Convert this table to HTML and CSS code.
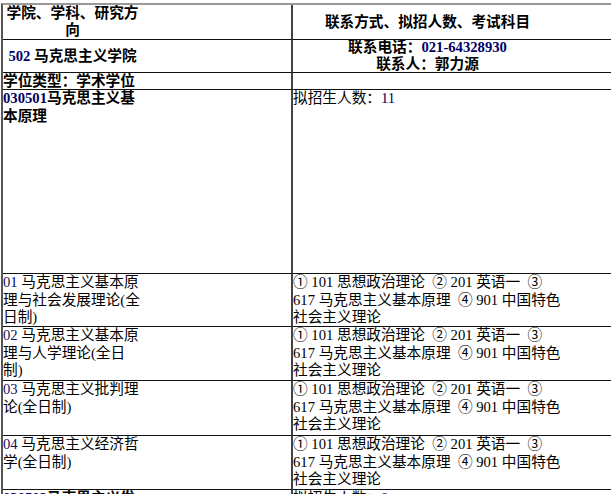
FILE: index.html
```html
<!DOCTYPE html>
<html lang="zh">
<head>
<meta charset="utf-8">
<title>招生目录</title>
<link rel="stylesheet" href="styles.css">
</head>
<body>
<div class="sheet">
  <div class="cell l row-head mid bold"><div class="wl center">学院、学科、研究方向</div></div>
  <div class="cell r row-head mid bold"><div class="wr center">联系方式、拟招人数、考试科目</div></div>

  <div class="cell l row-contact mid bold"><div class="wl center"><span class="n">502</span> 马克思主义学院</div></div>
  <div class="cell r row-contact mid bold"><div class="wr center">联系电话：<span class="n">021-64328930</span><br>联系人：郭力源</div></div>

  <div class="cell l row-type bold"><div class="wl">学位类型：学术学位</div></div>
  <div class="cell r row-type"></div>

  <div class="cell l row-major bold"><div class="wl"><span class="n">030501</span>马克思主义基本原理</div></div>
  <div class="cell r row-major"><div class="wr">拟招生人数：<span class="n">11</span></div></div>

  <div class="cell l row-dir1"><div class="wl"><span class="d">01</span> 马克思主义基本原理与社会发展理论(全日制)</div></div>
  <div class="cell r row-dir1"><div class="wr">① 101 思想政治理论&nbsp; ② 201 英语一&nbsp; ③ 617 马克思主义基本原理&nbsp; ④ 901 中国特色社会主义理论</div></div>

  <div class="cell l row-dir2"><div class="wl"><span class="d">02</span> 马克思主义基本原理与人学理论(全日制)</div></div>
  <div class="cell r row-dir2"><div class="wr">① 101 思想政治理论&nbsp; ② 201 英语一&nbsp; ③ 617 马克思主义基本原理&nbsp; ④ 901 中国特色社会主义理论</div></div>

  <div class="cell l row-dir3"><div class="wl"><span class="d">03</span> 马克思主义批判理论(全日制)</div></div>
  <div class="cell r row-dir3"><div class="wr">① 101 思想政治理论&nbsp; ② 201 英语一&nbsp; ③ 617 马克思主义基本原理&nbsp; ④ 901 中国特色社会主义理论</div></div>

  <div class="cell l row-dir4"><div class="wl"><span class="d">04</span> 马克思主义经济哲学(全日制)</div></div>
  <div class="cell r row-dir4"><div class="wr">① 101 思想政治理论&nbsp; ② 201 英语一&nbsp; ③ 617 马克思主义基本原理&nbsp; ④ 901 中国特色社会主义理论</div></div>

  <div class="cell l row-next bold"><div class="wl"><span class="n">030502</span>马克思主义发展史</div></div>
  <div class="cell r row-next"><div class="wr">拟招生人数：<span class="n">8</span></div></div>
</div>
</body>
</html>
```

FILE: styles.css
```css
html, body {
  margin: 0;
  padding: 0;
  overflow: hidden;
  background: #ffffff;
}

body {
  font-family: "Liberation Serif", "Noto Sans CJK SC", serif;
  font-size: 14.67px;
  color: #000000;
}

.sheet {
  display: grid;
  grid-template-columns: 290px 330px;
  width: 620px;
  margin: 3px 0 0 1px;
  border-top: 2px solid #999999;
  border-left: 2px solid #555555;
}

.cell {
  border-bottom: 1px solid #111111;
  line-height: 17.67px;
  overflow: hidden;
}

.l {
  border-right: 2px solid #444444;
}

.mid {
  display: flex;
  flex-direction: column;
  justify-content: center;
}

.bold {
  font-weight: bold;
}

.wl {
  width: 139px;
}

.wr {
  width: 269px;
}

.center {
  text-align: center;
}

.n {
  color: #000066;
}

.d {
  color: #101060;
}

.row-head {
  height: 34px;
  line-height: 17px;
}

.row-contact {
  height: 32px;
  line-height: 17px;
}

.row-type {
  height: 16px;
  line-height: 16px;
}

.row-major {
  height: 183px;
}

.row-dir1 {
  height: 52px;
}

.row-dir2 {
  height: 53px;
}

.row-dir3 {
  height: 54px;
}

.row-dir4 {
  height: 53px;
}

.row-next {
  height: 60px;
}
```
